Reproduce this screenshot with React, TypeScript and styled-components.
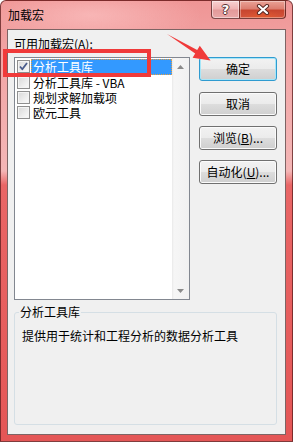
import styled, { createGlobalStyle } from "styled-components";

const GlobalStyle = createGlobalStyle`
  html, body {
    margin: 0;
    padding: 0;
    background: #fff;
  }
  body {
    font-family: "Noto Sans CJK SC", "Microsoft YaHei", sans-serif;
    font-size: 12px;
    color: #000;
  }
`;

interface AddIn {
  name: string;
  checked: boolean;
}

const addIns: AddIn[] = [
  { name: "分析工具库", checked: true },
  { name: "分析工具库 - VBA", checked: false },
  { name: "规划求解加载项", checked: false },
  { name: "欧元工具", checked: false },
];

const CheckMark = () => (
  <svg width="11" height="11" viewBox="0 0 11 11">
    <path
      d="M2 5.5 L4.3 8.3 L9 2"
      fill="none"
      stroke="#4a5c8c"
      strokeWidth="1.8"
      strokeLinejoin="round"
    />
  </svg>
);

const Arrow = ({ up }: { up?: boolean }) => (
  <svg width="7" height="4" viewBox="0 0 7 4">
    <polygon points={up ? "0,4 3.5,0 7,4" : "0,0 7,0 3.5,4"} fill="#8a8a8a" />
  </svg>
);

const CloseGlyph = () => (
  <svg width="14" height="11" viewBox="0 0 14 11">
    <path d="M3 2 L11 9 M11 2 L3 9" stroke="#5a2a24" strokeWidth="4.2" strokeLinecap="round" />
    <path d="M3 2 L11 9 M11 2 L3 9" stroke="#fff" strokeWidth="2.2" strokeLinecap="round" />
  </svg>
);

const App = () => {
  return (
    <>
      <GlobalStyle />
      <Window>
        <TitleBar>
          <Title>加载宏</Title>
          <CaptionButtons>
            <HelpButton>?</HelpButton>
            <CloseButton>
              <CloseGlyph />
            </CloseButton>
          </CaptionButtons>
        </TitleBar>

        <Client>
          <TopArea>
            <Label>
              可用加载宏(<U>A</U>):
            </Label>
            <ListBox>
              <Items>
                {addIns.map((item, i) => (
                  <Row key={item.name} $first={i === 0}>
                    <CheckBox>{item.checked ? <CheckMark /> : null}</CheckBox>
                    <ItemText $selected={i === 0}>{item.name}</ItemText>
                  </Row>
                ))}
              </Items>
              <ScrollBar>
                <ScrollArrow>
                  <Arrow up />
                </ScrollArrow>
                <ScrollArrow>
                  <Arrow />
                </ScrollArrow>
              </ScrollBar>
            </ListBox>
            <Buttons>
              <Button $default>确定</Button>
              <Button>取消</Button>
              <Button>
                浏览(<U>B</U>)...
              </Button>
              <Button>
                自动化(<U>U</U>)...
              </Button>
            </Buttons>
          </TopArea>

          <Group>
            <Legend>分析工具库</Legend>
            <Description>提供用于统计和工程分析的数据分析工具</Description>
          </Group>
        </Client>

        <Annotations width={293} height={442} viewBox="0 0 293 442">
          <rect x={5} y={51} width={144} height={24} fill="none" stroke="#f03a3a" strokeWidth={4} />
          <polygon
            points="167,34 197.2,50 199.8,45.7 210.5,60.5 192.6,57.7 195.2,53.4"
            fill="#f03a3a"
          />
        </Annotations>
      </Window>
    </>
  );
};

const Window = styled.div`
  position: relative;
  box-sizing: border-box;
  width: 293px;
  height: 442px;
  display: flex;
  flex-direction: column;
  padding: 0 6px 6px;
  border: 1px solid rgba(90, 30, 30, 0.75);
  border-radius: 6px 6px 0 0;
  background:
    radial-gradient(ellipse 110px 30px at 90px 14px, rgba(255, 205, 205, 0.55), transparent),
    linear-gradient(180deg, #ef9595 0px, #f2a6a6 60px, #f4b6b6 170px, #e96666 184px, #e45656 100%);
`;

const TitleBar = styled.div`
  height: 28px;
  display: flex;
  align-items: center;
  justify-content: space-between;
  padding-left: 1px;
`;

const Title = styled.span`
  font-size: 12px;
  line-height: 16px;
  color: #000;
`;

const CaptionButtons = styled.div`
  align-self: flex-start;
  display: flex;
  margin-top: -1px;
  margin-right: 0;
`;

const HelpButton = styled.div`
  box-sizing: border-box;
  width: 28px;
  height: 19px;
  display: flex;
  align-items: center;
  justify-content: center;
  border: 1px solid rgba(80, 30, 30, 0.75);
  border-right: none;
  border-radius: 0 0 0 4px;
  background: linear-gradient(180deg, #f8d2d2 0%, #f0b4b4 45%, #e39a9a 55%, #eaa8a8 100%);
  box-shadow: inset 0 0 0 1px rgba(255, 255, 255, 0.45);
  font-family: "DejaVu Sans", sans-serif;
  font-weight: bold;
  font-size: 13px;
  color: #fff;
  text-shadow:
    1px 0 0 #5a3030, -1px 0 0 #5a3030, 0 1px 0 #5a3030, 0 -1px 0 #5a3030;
`;

const CloseButton = styled.div`
  box-sizing: border-box;
  width: 47px;
  height: 19px;
  display: flex;
  align-items: center;
  justify-content: center;
  border: 1px solid rgba(80, 30, 30, 0.75);
  border-radius: 0 0 4px 0;
  background:
    radial-gradient(ellipse 20px 8px at 50% 100%, rgba(230, 90, 40, 0.8), transparent),
    linear-gradient(180deg, #eaa296 0%, #dc7e70 45%, #c8452e 55%, #d4553c 100%);
  box-shadow: inset 0 0 0 1px rgba(255, 255, 255, 0.35);
`;

const Client = styled.div`
  flex: 1;
  display: flex;
  flex-direction: column;
  border: 1px solid #7d6464;
  background: #f0f0f0;
  padding: 6px 8px 9px 6px;
`;

const TopArea = styled.div`
  display: grid;
  grid-template-columns: 176px 78px;
  grid-template-rows: 16px 243px;
  column-gap: 9px;
  row-gap: 5px;
`;

const Label = styled.div`
  grid-column: 1 / span 2;
  line-height: 16px;
`;

const U = styled.span`
  text-decoration: underline;
`;

const ListBox = styled.div`
  box-sizing: border-box;
  display: flex;
  border: 1px solid #828790;
  background: #fff;
`;

const Items = styled.div`
  flex: 1;
  display: flex;
  flex-direction: column;
`;

const Row = styled.div<{ $first?: boolean }>`
  display: flex;
  align-items: center;
  height: ${(p) => (p.$first ? "17px" : "15px")};
  padding-left: 2px;
`;

const CheckBox = styled.div`
  box-sizing: border-box;
  width: 13px;
  height: 13px;
  display: flex;
  align-items: center;
  justify-content: center;
  border: 1px solid #8f8f8f;
  background: linear-gradient(135deg, #d8d8d8 0%, #eeeeee 60%, #fbfbfb 100%);
  box-shadow: inset 0 0 0 1px #f4f4f4;
  margin-right: 1px;
`;

const ItemText = styled.div<{ $selected?: boolean }>`
  flex: 1;
  box-sizing: border-box;
  height: ${(p) => (p.$selected ? "16px" : "15px")};
  line-height: 14px;
  padding: 0 2px 0 1px;
  border: 1px dotted ${(p) => (p.$selected ? "#e8a040" : "transparent")};
  background: ${(p) => (p.$selected ? "#3399ff" : "transparent")};
  color: ${(p) => (p.$selected ? "#fff" : "#000")};
  white-space: nowrap;
`;

const ScrollBar = styled.div`
  width: 17px;
  display: flex;
  flex-direction: column;
  justify-content: space-between;
  background: linear-gradient(90deg, #e9e9e9 0px, #f6f6f6 2px, #f1f1f1 100%);
`;

const ScrollArrow = styled.div`
  height: 17px;
  display: flex;
  align-items: center;
  justify-content: center;
`;

const Buttons = styled.div`
  display: flex;
  flex-direction: column;
  gap: 10px;
`;

const Button = styled.button<{ $default?: boolean }>`
  box-sizing: border-box;
  width: 78px;
  height: 24px;
  padding: 0;
  margin-bottom: ${(p) => (p.$default ? "1px" : "0")};
  border: 1px solid ${(p) => (p.$default ? "#2f9bd0" : "#707070")};
  border-radius: 3px;
  background: linear-gradient(180deg, #f2f2f2 0%, #ebebeb 50%, #dddddd 50%, #cfcfcf 100%);
  box-shadow: inset 0 0 0 1px ${(p) => (p.$default ? "#a6e6f8" : "#fbfbfb")};
  font-family: inherit;
  font-size: 12px;
  line-height: 16px;
  color: #000;
`;

const Group = styled.fieldset`
  flex: 1;
  margin: 4px 0 0;
  padding: 8px 7px;
  min-width: 0;
  border: 1px solid #d5dfe5;
  border-radius: 3px;
`;

const Legend = styled.legend`
  padding: 0 1px;
  margin-left: -3px;
  line-height: 16px;
`;

const Description = styled.div`
  line-height: 16px;
`;

const Annotations = styled.svg`
  position: absolute;
  left: -1px;
  top: -1px;
  pointer-events: none;
`;

export default App;
